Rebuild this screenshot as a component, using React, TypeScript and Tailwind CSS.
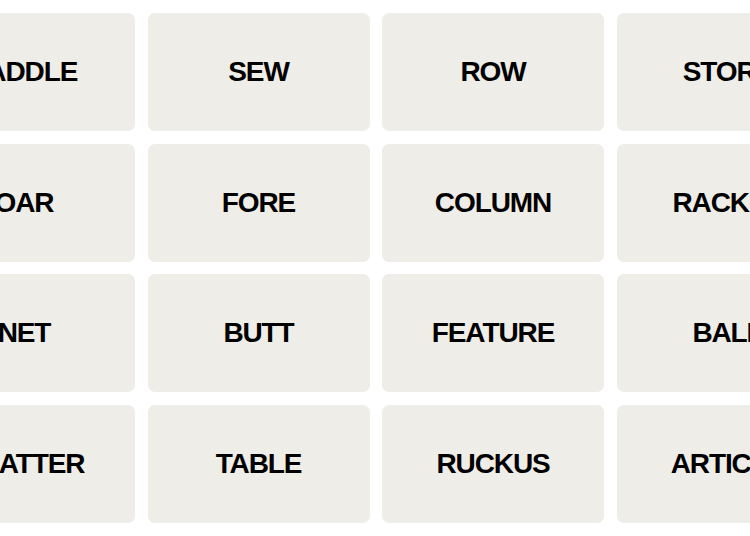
import React from "react"

const words = [
    "PADDLE", "SEW", "ROW", "STORY",
    "OAR", "FORE", "COLUMN", "RACKET",
    "NET", "BUTT", "FEATURE", "BALL",
    "CLATTER", "TABLE", "RUCKUS", "ARTICLE",
]

const App = () => {
    return (
        <div className="w-[750px] h-[536px] overflow-hidden bg-white flex justify-center pt-[13px]">
            <div className="grid grid-cols-[repeat(4,222px)] auto-rows-[118px] gap-x-[12.5px] gap-y-[12.7px] shrink-0 w-[926px] h-fit ml-[2px]">
                {words.map((w, i) => (
                    <div
                        key={i}
                        className="bg-[#efede7] rounded-[7px] flex items-center justify-center"
                    >
                        <span className="text-[28px] font-bold text-black tracking-[-1.1px] font-['Liberation_Sans',Arial,sans-serif]">
                            {w}
                        </span>
                    </div>
                ))}
            </div>
        </div>
    )
}

export default App
